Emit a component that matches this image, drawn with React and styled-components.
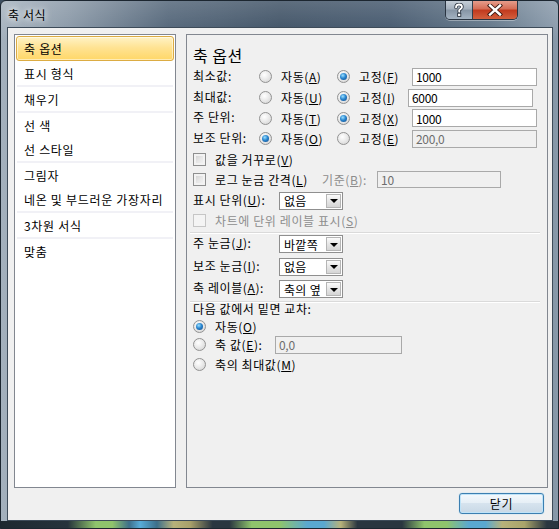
import styled, { createGlobalStyle, css } from "styled-components";

const GlobalStyle = createGlobalStyle`
  html, body {
    margin: 0;
    padding: 0;
    background: #3c4e60;
  }
  body {
    font-family: "Noto Sans CJK KR", "Noto Sans", sans-serif;
    font-size: 12px;
    color: #000;
  }
`;

const FONT = `"Noto Sans CJK KR", "Noto Sans", sans-serif`;

const Window = styled.div`
  width: 559px;
  height: 529px;
  box-sizing: border-box;
  display: flex;
  flex-direction: column;
  border-radius: 6px 6px 0 0;
  border: 1px solid #1c2630;
  background:
    linear-gradient(to bottom, rgba(255, 255, 255, 0.18), rgba(255, 255, 255, 0) 40px),
    linear-gradient(
      to right,
      #a4b1bd 0%,
      #8796a5 12%,
      #4e6175 30%,
      #3b4e62 50%,
      #40546a 70%,
      #5f7386 88%,
      #8899aa 100%
    );
  overflow: hidden;
`;

const TitleBar = styled.div`
  height: 27px;
  display: flex;
  align-items: flex-start;
  justify-content: space-between;
  padding-left: 7px;
`;

const Title = styled.div`
  font-family: ${FONT};
  font-size: 12px;
  line-height: 12px;
  margin-top: 8px;
  letter-spacing: 0.6px;
  color: #000;
  text-shadow: 0 0 6px #fff, 0 0 8px rgba(255, 255, 255, 0.8);
`;

const CaptionButtons = styled.div`
  display: flex;
  margin-right: 40px;
  margin-top: -1px;
  border: 1px solid #2a3542;
  border-top: none;
  border-radius: 0 0 5px 5px;
  overflow: hidden;
  box-shadow: 0 1px 0 rgba(255, 255, 255, 0.35);
`;

const CaptionButton = styled.div`
  height: 19px;
  width: ${(p) => p.$w}px;
  display: flex;
  align-items: center;
  justify-content: center;
  ${(p) =>
    p.$close
      ? css`
          background: linear-gradient(to bottom, #e8a392 0%, #d66f58 45%, #c23b1f 55%, #d3603e 100%);
        `
      : css`
          background: linear-gradient(to bottom, #c9d2db 0%, #a6b2bf 45%, #8796a6 55%, #a4b3c2 100%);
          border-right: 1px solid #34404c;
        `}
`;

const Client = styled.div`
  flex: 1;
  margin: 0 5px 0 6px;
  border: 1px solid #3d4b59;
  background: #f0f0f0;
  padding: 6px 4px 6px 6px;
  display: flex;
  flex-direction: column;
`;

const BottomGlass = styled.div`
  height: 7px;
  background: linear-gradient(
    to right,
    #1d2830 0%,
    #26333c 12%,
    #8fc46c 17%,
    #8fc46c 20%,
    #3d6f8a 23%,
    #58acd8 25%,
    #3d6f8a 28%,
    #b7b27a 31%,
    #a8a06a 34%,
    #2a3640 38%,
    #2a3640 41%,
    #8fc46c 45%,
    #8fc46c 50%,
    #5aa8d0 55%,
    #5aa8d0 58%,
    #b7b27a 61%,
    #2a3640 64%,
    #2a3640 72%,
    #8fc46c 76%,
    #8fc46c 80%,
    #5aa8d0 84%,
    #5aa8d0 87%,
    #b7b27a 90%,
    #a9a46a 94%,
    #2a3640 98%
  );
`;

const Panels = styled.div`
  display: flex;
  gap: 10px;
  height: 454px;
`;

const ListPanel = styled.div`
  width: 162px;
  box-sizing: border-box;
  background: #fff;
  border: 1px solid #828790;
  padding: 1px;
  display: flex;
  flex-direction: column;
`;

const ListItem = styled.div`
  height: 24px;
  box-sizing: border-box;
  display: flex;
  align-items: center;
  padding-left: 7px;
  font-family: ${FONT};
  font-size: 12px;
  letter-spacing: 0.7px;
  white-space: nowrap;
  border: 1px solid transparent;
  border-radius: 3px;
  ${(p) =>
    p.$selected &&
    css`
      height: 25px;
      border-color: #dcac43;
      background: linear-gradient(to bottom, #fff3c6 0%, #ffe394 45%, #ffd767 100%);
      box-shadow: inset 0 0 0 1px rgba(255, 255, 255, 0.5);
    `}
`;

const ListSep = styled.div`
  height: 2px;
  margin: 0 1px;
  background: #f1f1f6;
`;

const OptionsPanel = styled.div`
  flex: 1;
  box-sizing: border-box;
  background: #f0f0f0;
  border: 1px solid #828790;
  padding: 10px 6px 0 6px;
  display: flex;
  flex-direction: column;
  font-family: ${FONT};
  font-size: 12px;
  letter-spacing: 0.6px;
`;

const SectionTitle = styled.div`
  height: 21px;
  font-size: 16px;
  line-height: 20px;
  letter-spacing: 0.5px;
`;

const Row = styled.div`
  height: ${(p) => p.$h || 21}px;
  display: flex;
  align-items: center;
  white-space: nowrap;
  color: ${(p) => (p.$disabled ? "#8d8d8d" : "#000")};
`;

const Label = styled.span`
  width: ${(p) => p.$w}px;
  flex: none;
  margin-top: -3px;
`;

const Option = styled.label`
  display: flex;
  align-items: center;
  gap: 9px;
  width: ${(p) => (p.$w ? `${p.$w}px` : "auto")};
  flex: none;
`;

const Radio = styled.span`
  width: 13px;
  height: 13px;
  box-sizing: border-box;
  flex: none;
  border-radius: 50%;
  border: 1px solid #929292;
  background: radial-gradient(circle at 40% 35%, #ffffff 0%, #ebebeb 45%, #cfcfcf 100%);
  position: relative;
  ${(p) =>
    p.$checked &&
    css`
      &::after {
        content: "";
        position: absolute;
        left: 2px;
        top: 2px;
        width: 7px;
        height: 7px;
        border-radius: 50%;
        background: radial-gradient(circle at 40% 35%, #9be0ff 0%, #2a86cf 45%, #0e4584 100%);
      }
    `}
`;

const Checkbox = styled.span`
  width: 13px;
  height: 13px;
  box-sizing: border-box;
  flex: none;
  border: 1px solid ${(p) => (p.$disabled ? "#c6c6c6" : "#8e8f8f")};
  background: ${(p) =>
    p.$disabled
      ? "#f4f4f4"
      : "linear-gradient(135deg, #cbcbcb 0%, #e6e6e6 50%, #f6f6f6 100%)"};
  box-shadow: inset 0 0 0 2px ${(p) => (p.$disabled ? "#f4f4f4" : "#f2f2f2")};
`;

const TextField = styled.div`
  width: ${(p) => p.$w || 125}px;
  height: ${(p) => p.$hgt || 18}px;
  box-sizing: border-box;
  flex: none;
  border: 1px solid #a9a9a9;
  background: ${(p) => (p.$disabled ? "#f0f0f0" : "#fff")};
  color: ${(p) => (p.$disabled ? "#6d6d6d" : "#000")};
  padding-left: 3px;
  display: flex;
  align-items: center;
  font-size: 12px;
  letter-spacing: -0.3px;
`;

const Select = styled.div`
  width: 64px;
  height: 18px;
  box-sizing: border-box;
  flex: none;
  border: 1px solid #8f8f8f;
  background: #fff;
  display: flex;
  align-items: center;
  padding: 1px;
`;

const SelectValue = styled.span`
  flex: 1;
  padding-left: 3px;
  overflow: hidden;
  letter-spacing: 0.3px;
`;

const SelectButton = styled.span`
  width: 15px;
  height: 14px;
  box-sizing: border-box;
  border: 1px solid #b5b5b5;
  background: linear-gradient(to bottom, #fbfbfb 0%, #e6e6e6 50%, #d5d5d5 100%);
  display: flex;
  align-items: center;
  justify-content: center;
`;

const Arrow = styled.span`
  width: 0;
  height: 0;
  border-left: 4px solid transparent;
  border-right: 4px solid transparent;
  border-top: 4px solid #000;
  margin-top: 1px;
`;

const Separator = styled.div`
  height: ${(p) => p.$h || 4}px;
  flex: none;
  display: flex;
  align-items: flex-end;
  margin-left: -3px;
  margin-right: 1px;
  &::before {
    content: "";
    display: block;
    width: 100%;
    height: 1px;
    background: #dadada;
    box-shadow: 0 1px 0 #fff;
  }
`;

const Gap = styled.span`
  width: ${(p) => p.$w}px;
  flex: none;
`;

const Footer = styled.div`
  display: flex;
  justify-content: flex-end;
  padding-top: 5px;
  padding-right: 4px;
`;

const CloseButton = styled.button`
  width: 85px;
  height: 21px;
  border: 1px solid #3c7fb1;
  border-radius: 3px;
  background: linear-gradient(to bottom, #f4f9fd 0%, #e6eff6 45%, #d6e3ee 50%, #c8d8e6 100%);
  box-shadow: inset 0 0 0 1px #bfe3f8, 0 0 1px #6cc3f0;
  font-family: ${FONT};
  font-size: 12px;
  letter-spacing: 0.6px;
  padding: 0;
  color: #000;
`;

function Dropdown({ value }) {
  return (
    <Select>
      <SelectValue>{value}</SelectValue>
      <SelectButton>
        <Arrow />
      </SelectButton>
    </Select>
  );
}

const listGroups = [
  ["축 옵션", "표시 형식"],
  ["채우기"],
  ["선 색", "선 스타일"],
  ["그림자", "네온 및 부드러운 가장자리"],
  ["3차원 서식"],
  ["맞춤"],
];

const axisRows = [
  { label: "최소값:", auto: "A", fixed: "F", fixedOn: true, value: "1000", w: 75 },
  { label: "최대값:", auto: "U", fixed: "I", fixedOn: true, value: "6000", w: 71 },
  { label: "주 단위:", auto: "T", fixed: "X", fixedOn: true, value: "1000", w: 75, h: 20 },
  { label: "보조 단위:", auto: "O", fixed: "E", fixedOn: false, value: "200,0", w: 75 },
];

// label text followed by its access key, underlined, in brackets
function Mn({ text, k }) {
  return (
    <span>
      {text}(<u>{k}</u>)
    </span>
  );
}

export default function App() {
  return (
    <>
      <GlobalStyle />
      <Window>
        <TitleBar>
          <Title>축 서식</Title>
          <CaptionButtons>
            <CaptionButton $w={26}>
              <svg width="12" height="14" viewBox="0 0 12 14">
                <path
                  d="M3 4.5 C3 2 4.5 1.5 6 1.5 C7.8 1.5 9 2.5 9 4 C9 5.6 7 6 6.2 7.3 L6.2 8.8"
                  fill="none"
                  stroke="#2b3440"
                  strokeWidth="3.4"
                  strokeLinecap="round"
                />
                <path
                  d="M3 4.5 C3 2 4.5 1.5 6 1.5 C7.8 1.5 9 2.5 9 4 C9 5.6 7 6 6.2 7.3 L6.2 8.8"
                  fill="none"
                  stroke="#fff"
                  strokeWidth="1.8"
                  strokeLinecap="round"
                />
                <rect x="4.6" y="10.2" width="3.2" height="3.2" fill="#fff" stroke="#2b3440" strokeWidth="0.9" />
              </svg>
            </CaptionButton>
            <CaptionButton $w={44} $close>
              <svg width="16" height="12" viewBox="0 0 16 12">
                <path d="M3 1.5 L13 10.5 M13 1.5 L3 10.5" stroke="#3a1a14" strokeWidth="4.2" strokeLinecap="square" />
                <path d="M3 1.5 L13 10.5 M13 1.5 L3 10.5" stroke="#fff" strokeWidth="2.4" strokeLinecap="square" />
              </svg>
            </CaptionButton>
          </CaptionButtons>
        </TitleBar>
        <Client>
          <Panels>
            <ListPanel>
              {listGroups.map((group, gi) => (
                <div key={gi}>
                  {gi > 0 && <ListSep />}
                  {group.map((item) => (
                    <ListItem key={item} $selected={item === "축 옵션"}>
                      {item}
                    </ListItem>
                  ))}
                </div>
              ))}
            </ListPanel>
            <OptionsPanel>
              <SectionTitle>축 옵션</SectionTitle>
              {axisRows.map((r) => (
                <Row key={r.label} $h={r.h}>
                  <Label $w={66}>{r.label}</Label>
                  <Option $w={78}>
                    <Radio $checked={!r.fixedOn} />
                    <Mn text="자동" k={r.auto} />
                  </Option>
                  <Option $w={r.w}>
                    <Radio $checked={r.fixedOn} />
                    <Mn text="고정" k={r.fixed} />
                  </Option>
                  <TextField $disabled={!r.fixedOn}>{r.value}</TextField>
                </Row>
              ))}
              <Row $h={20}>
                <Option>
                  <Checkbox />
                  <span>
                    값을 거꾸로(<u>V</u>)
                  </span>
                </Option>
              </Row>
              <Row>
                <Option $w={129}>
                  <Checkbox />
                  <span>
                    로그 눈금 간격(<u>L</u>)
                  </span>
                </Option>
                <Row as="span" $disabled>
                  기준(<u>B</u>):
                </Row>
                <Gap $w={10} />
                <TextField $disabled $w={124} $hgt={17}>
                  10
                </TextField>
              </Row>
              <Row>
                <Label $w={86}>
                  표시 단위(<u>U</u>):
                </Label>
                <Dropdown value="없음" />
              </Row>
              <Row $h={18} $disabled>
                <Option>
                  <Checkbox $disabled />
                  <span>
                    차트에 단위 레이블 표시(<u>S</u>)
                  </span>
                </Option>
              </Row>
              <Separator $h={4} />
              <Row $h={22}>
                <Label $w={86}>
                  주 눈금(<u>J</u>):
                </Label>
                <Dropdown value="바깥쪽" />
              </Row>
              <Row $h={23}>
                <Label $w={86}>
                  보조 눈금(<u>I</u>):
                </Label>
                <Dropdown value="없음" />
              </Row>
              <Row $h={22}>
                <Label $w={86}>
                  축 레이블(<u>A</u>):
                </Label>
                <Dropdown value="축의 옆" />
              </Row>
              <Separator $h={2} />
              <Row $h={16}>
                <Label $w={200}>다음 값에서 밑면 교차:</Label>
              </Row>
              <Row $h={16}>
                <Option>
                  <Radio $checked />
                  <Mn text="자동" k="O" />
                </Option>
              </Row>
              <Row>
                <Option $w={82}>
                  <Radio />
                  <span>
                    축 값(<u>E</u>):
                  </span>
                </Option>
                <TextField $disabled $w={127}>
                  0,0
                </TextField>
              </Row>
              <Row $h={19}>
                <Option>
                  <Radio />
                  <Mn text="축의 최대값" k="M" />
                </Option>
              </Row>
            </OptionsPanel>
          </Panels>
          <Footer>
            <CloseButton>닫기</CloseButton>
          </Footer>
        </Client>
        <BottomGlass />
      </Window>
    </>
  );
}
